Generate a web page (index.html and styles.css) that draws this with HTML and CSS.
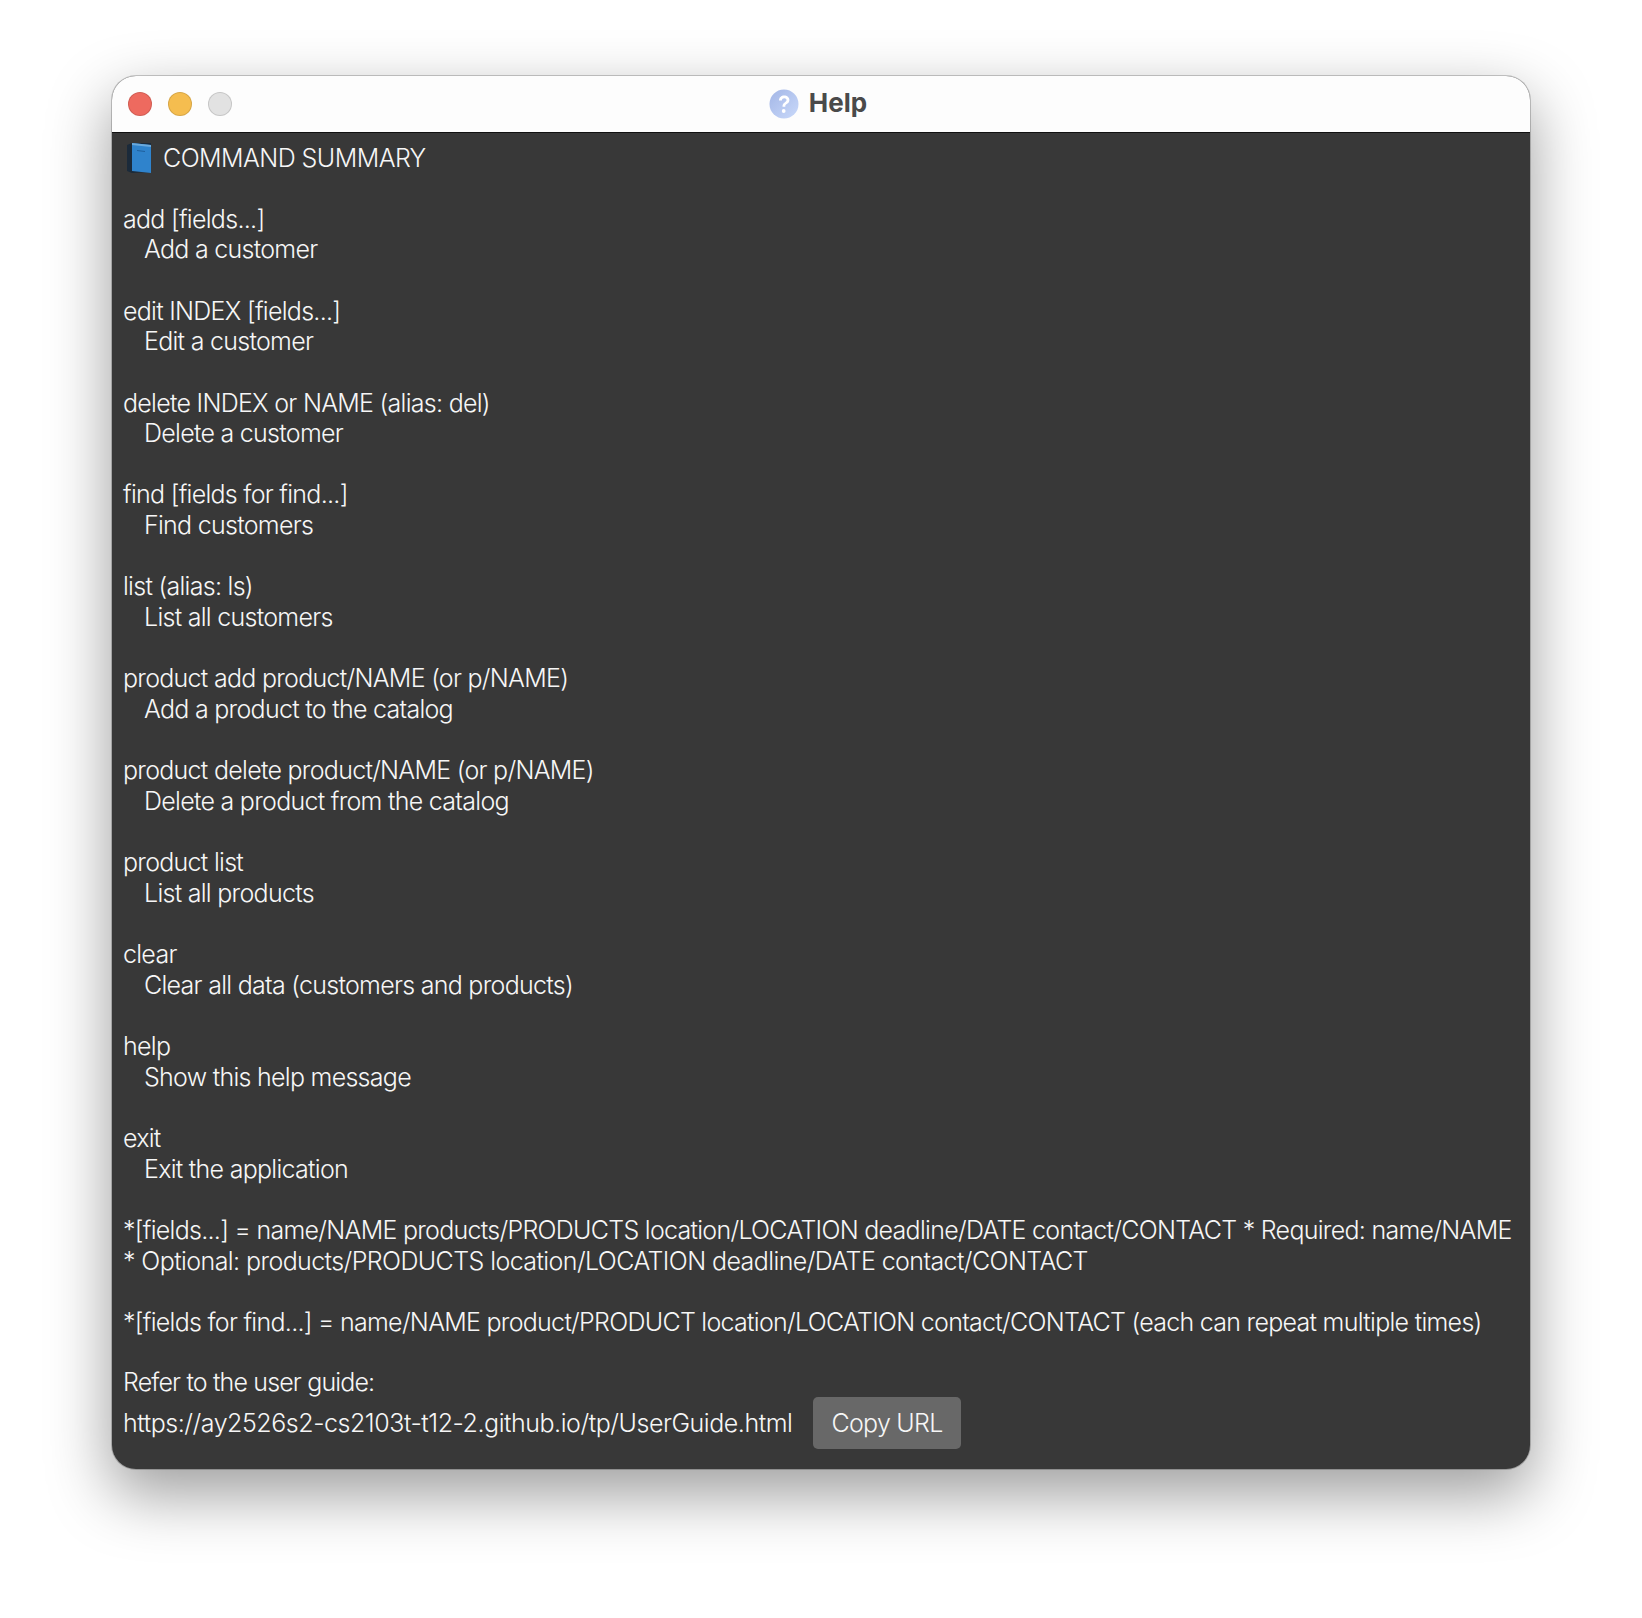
FILE: index.html
```html
<!DOCTYPE html>
<html lang="en">
<head>
    <meta charset="UTF-8">
    <title>Help</title>
    <link rel="stylesheet" href="styles.css">
</head>
<body>
    <div class="window">
        <header class="titlebar">
            <div class="lights">
                <span class="light red"></span>
                <span class="light yellow"></span>
                <span class="light grey"></span>
            </div>
            <div class="title">
                <svg class="help-icon" width="30" height="30" viewBox="0 0 30 30">
                    <defs>
                        <linearGradient id="helpFill" x1="0" y1="0" x2="1" y2="1">
                            <stop offset="0" stop-color="#a3b6e6"/>
                            <stop offset="1" stop-color="#c9d9fa"/>
                        </linearGradient>
                    </defs>
                    <circle cx="15" cy="15" r="14.5" fill="url(#helpFill)"/>
                    <path d="M10 11.5c0-3 2.200-5 5.200-5 3 0 5.200 1.800 5.200 4.500 0 2-1 3-2.600 4-1.200.8-1.500 1.300-1.500 2.700h-2.800c0-2.200.6-3.200 2.200-4.300 1.200-.8 1.800-1.400 1.800-2.300 0-1-.8-1.800-2.200-1.800-1.400 0-2.300.9-2.400 2.200z" fill="#ffffff"/>
                    <circle cx="14.700" cy="22" r="1.900" fill="#ffffff"/>
                </svg>
                <span class="title-text">Help</span>
            </div>
        </header>

        <main class="content">
            <section class="block heading">
                <svg class="book" width="26" height="32" viewBox="0 0 26 32">
                    <path d="M1 3 L6 1 H25 V30 L6 31 L1 29 Z" fill="#1b2a3a"/>
                    <path d="M6 1 L25 3 V31 L6 29 Z" fill="#2f83cc"/>
                    <path d="M6 1 L25 3 V5 L6 3 Z" fill="#6aa9dc"/>
                    <path d="M11 8 L19 9 V10 L11 9 Z" fill="#1f5f9c"/>
                </svg>
                <span>COMMAND SUMMARY</span>
            </section>

            <section class="block">
                <div>add [fields...]</div>
                <div class="desc">Add a customer</div>
            </section>
            <section class="block">
                <div>edit INDEX [fields...]</div>
                <div class="desc">Edit a customer</div>
            </section>
            <section class="block">
                <div>delete INDEX or NAME (alias: del)</div>
                <div class="desc">Delete a customer</div>
            </section>
            <section class="block">
                <div>find [fields for find...]</div>
                <div class="desc">Find customers</div>
            </section>
            <section class="block">
                <div>list (alias: ls)</div>
                <div class="desc">List all customers</div>
            </section>
            <section class="block">
                <div>product add product/NAME (or p/NAME)</div>
                <div class="desc">Add a product to the catalog</div>
            </section>
            <section class="block">
                <div>product delete product/NAME (or p/NAME)</div>
                <div class="desc">Delete a product from the catalog</div>
            </section>
            <section class="block">
                <div>product list</div>
                <div class="desc">List all products</div>
            </section>
            <section class="block">
                <div>clear</div>
                <div class="desc">Clear all data (customers and products)</div>
            </section>
            <section class="block">
                <div>help</div>
                <div class="desc">Show this help message</div>
            </section>
            <section class="block">
                <div>exit</div>
                <div class="desc">Exit the application</div>
            </section>

            <section class="block">
                <div>*[fields...] = name/NAME products/PRODUCTS location/LOCATION deadline/DATE contact/CONTACT * Required: name/NAME</div>
                <div class="optional">* Optional: products/PRODUCTS location/LOCATION deadline/DATE contact/CONTACT</div>
            </section>
            <section class="block">
                <div>*[fields for find...] = name/NAME product/PRODUCT location/LOCATION contact/CONTACT (each can repeat multiple times)</div>
            </section>

            <footer class="guide">
                <div class="guide-label">Refer to the user guide:</div>
                <div class="guide-row">
                    <span class="guide-url">https://ay2526s2-cs2103t-t12-2.github.io/tp/UserGuide.html</span>
                    <button class="copy-button">Copy URL</button>
                </div>
            </footer>
        </main>
    </div>
</body>
</html>
```

FILE: styles.css
```css
*{
    box-sizing: border-box;
    margin: 0;
    padding: 0;
}

body{
    width: 1642px;
    height: 1618px;
    padding: 76px 112px 0;
    background: #ffffff;
    font-family: "Inter", sans-serif;
    overflow: hidden;
}

.window{
    display: flex;
    flex-direction: column;
    height: 1393px;
    border-radius: 24px;
    background: #383838;
    box-shadow: 0 0 0 1px rgba(0, 0, 0, 0.2), 0 24px 62px 2px rgba(0, 0, 0, 0.38);
    overflow: hidden;
}

.titlebar{
    display: grid;
    grid-template-columns: 1fr auto 1fr;
    align-items: center;
    flex: none;
    height: 57px;
    padding: 0 16px;
    background: #fdfdfd;
    border-bottom: 1px solid #111111;
}

.lights{
    display: flex;
    gap: 16px;
}

.light{
    width: 24px;
    height: 24px;
    border-radius: 50%;
    border: 1px solid rgba(0, 0, 0, 0.12);
}

.red{
    background: #ee6a5f;
}

.yellow{
    background: #f5bd4f;
}

.grey{
    background: #e2e2e2;
}

.title{
    display: flex;
    align-items: center;
    gap: 10px;
    margin-left: -6px;
    color: #4a4a4a;
    font-size: 26px;
    font-weight: 700;
}

.title-text{
    padding-bottom: 3px;
}

.content{
    padding: 9px 11px 0;
    color: #f6f6f6;
    font-size: 25px;
    font-weight: 300;
    line-height: 30.65px;
    letter-spacing: -0.72px;
    white-space: nowrap;
}

.block{
    margin-bottom: 30.65px;
}

.heading{
    display: flex;
    align-items: center;
    gap: 11px;
    margin-bottom: 29.6px;
    padding-left: 3px;
    letter-spacing: -0.55px;
}

.desc{
    padding-left: 21px;
}

.optional{
    letter-spacing: -0.59px;
}

.guide{
    margin-top: -1px;
}

.guide-label{
    letter-spacing: -0.85px;
}

.guide-row{
    display: flex;
    align-items: center;
    gap: 21px;
    margin-top: -1px;
}

.guide-url{
    letter-spacing: -0.46px;
}

.copy-button{
    padding: 0 18px;
    height: 52px;
    border: none;
    border-radius: 5px;
    background: #686868;
    color: #f6f6f6;
    font: inherit;
    letter-spacing: inherit;
}
```
